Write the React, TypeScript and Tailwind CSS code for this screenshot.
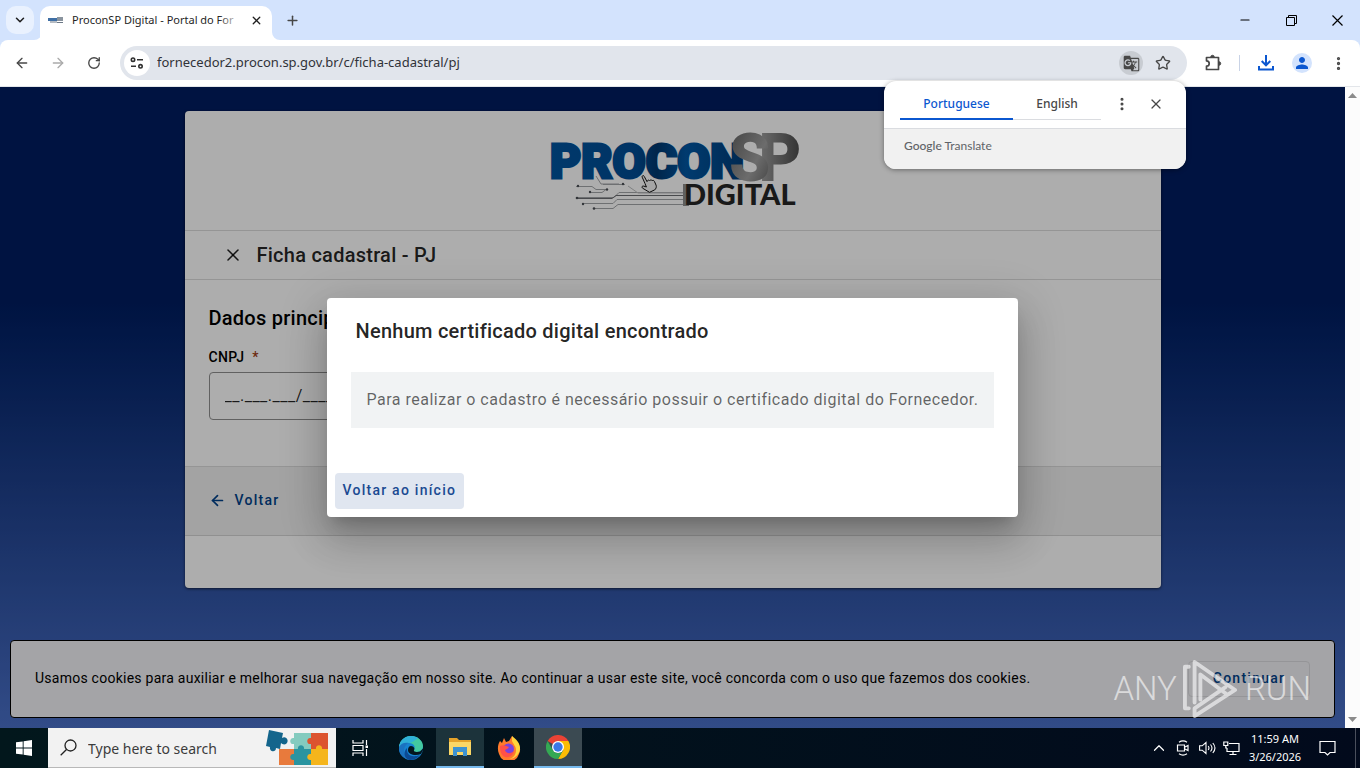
import type { ReactNode } from "react";
import { ArrowLeft, ArrowRight, ChevronDown, ChevronUp, Minus, MoreVertical, Plus, RotateCw, Star, X } from "lucide-react";
import { MdGTranslate, MdPerson } from "react-icons/md";

function IconButton({ label, className = "", children }: { label: string; className?: string; children: ReactNode }) {
  return (
    <button type="button" aria-label={label} className={`flex shrink-0 items-center justify-center ${className}`}>
      {children}
    </button>
  );
}

function TabStrip() {
  return (
    <header className="flex h-10 shrink-0 items-end bg-[#d3e3fd] pl-1.5 text-[#1f1f1f]">
      <IconButton label="Search tabs" className="mb-1.5 h-7 w-7 rounded-[10px] bg-[#e9f1fe]">
        <ChevronDown size={14} strokeWidth={2.6} />
      </IconButton>
      <div className="flex h-[34px] items-end">
        <svg width="8" height="8" viewBox="0 0 8 8" className="shrink-0">
          <path d="M8 0v8H0a8 8 0 0 0 8-8z" fill="#fff" />
        </svg>
        <div className="-ml-0.5 flex h-[34px] w-[232px] items-center rounded-t-[10px] bg-white pr-1.5 pb-1.5 pl-2">
          <svg width="16" height="16" viewBox="0 0 16 16" className="mr-2 shrink-0">
            <path d="M0 6h10v3H0z" fill="#3f6fa5" />
            <path d="M9 5h6v4H9z" fill="#8a949e" />
            <path d="M2 10h7M9 10.500h6" stroke="#6c7886" strokeWidth="1" />
          </svg>
          <span className="relative flex-1 overflow-hidden text-[11px] leading-5 whitespace-nowrap">
            ProconSP Digital - Portal do For
            <span className="absolute inset-y-0 right-0 w-6 bg-linear-to-r from-white/0 to-white" />
          </span>
          <IconButton label="Close tab" className="ml-1 h-5 w-5">
            <X size={13} strokeWidth={2.4} />
          </IconButton>
        </div>
        <svg width="8" height="8" viewBox="0 0 8 8" className="shrink-0">
          <path d="M0 0v8h8a8 8 0 0 1-8-8z" fill="#fff" />
        </svg>
      </div>
      <IconButton label="New tab" className="-ml-0.5 mb-1.5 h-7 w-7 text-[#474747]">
        <Plus size={15} strokeWidth={2.4} />
      </IconButton>
      <div className="ml-auto flex h-10 text-black">
        <IconButton label="Minimize" className="w-[46px]">
          <Minus size={14} strokeWidth={1.8} />
        </IconButton>
        <IconButton label="Restore" className="w-[46px]">
          <svg width="11" height="11" viewBox="0 0 11 11" fill="none" stroke="currentColor">
            <path d="M.5 2.500h8v8h-8zM2.500 2.500v-2h8v8h-2" />
          </svg>
        </IconButton>
        <IconButton label="Close" className="w-[46px]">
          <svg width="11" height="11" viewBox="0 0 11 11" stroke="currentColor" strokeWidth="1.2">
            <path d="M.5.5l10 10M10.500.5l-10 10" />
          </svg>
        </IconButton>
      </div>
    </header>
  );
}

function Toolbar() {
  return (
    <div className="flex h-[47px] shrink-0 items-center rounded-t-lg border-b border-[#e3e6ea] bg-white pr-2 pl-2 text-[#474747]">
      <IconButton label="Back" className="h-7 w-7">
        <ArrowLeft size={16} />
      </IconButton>
      <IconButton label="Forward" className="ml-2 h-7 w-7 text-[#aaaaaa]">
        <ArrowRight size={16} />
      </IconButton>
      <IconButton label="Reload" className="ml-2 h-7 w-7">
        <RotateCw size={14} strokeWidth={2.3} />
      </IconButton>
      <form className="ml-3 flex h-[34px] flex-1 items-center rounded-full bg-[#e1e5ec] pr-3 pl-1">
        <IconButton label="View site information" className="h-[26px] w-[26px] rounded-full bg-white">
          <svg width="14" height="12" viewBox="0 0 14 12" fill="none" stroke="#303030" strokeWidth="1.6">
            <circle cx="3" cy="2.700" r="1.700" />
            <path d="M7 2.700h6M1 9.300h5" />
            <circle cx="10.500" cy="9.300" r="1.700" />
          </svg>
        </IconButton>
        <input
          aria-label="Address and search bar"
          defaultValue="fornecedor2.procon.sp.gov.br/c/ficha-cadastral/pj"
          className="ml-[7px] h-6 w-0 flex-1 bg-transparent pb-0.5 text-[13px] text-[#303238] outline-none"
        />
        <IconButton label="Translate this page" className="h-6 w-6 rounded-full bg-[#c8ccd2]">
          <MdGTranslate size={17} />
        </IconButton>
        <IconButton label="Bookmark this tab" className="ml-2 h-6 w-6">
          <Star size={16} />
        </IconButton>
      </form>
      <IconButton label="Extensions" className="ml-3 h-7 w-7">
        <svg width="18" height="18" viewBox="0 0 18 18" fill="none" stroke="currentColor" strokeWidth="1.700" strokeLinejoin="round">
          <path d="M2.500 3.500h12v12h-12v-3.300a2.700 2.700 0 0 0 0-5.400z" />
          <path d="M6.800 3a1.700 1.700 0 0 1 3.400 0zM15 7.800a1.700 1.700 0 0 1 0 3.400z" fill="currentColor" strokeWidth="1" />
        </svg>
      </IconButton>
      <span className="mx-3 h-4 w-px bg-[#c9d3e6]" />
      <IconButton label="Downloads" className="h-7 w-7 text-[#0b57d0]">
        <svg width="18" height="18" viewBox="0 0 18 18" fill="none" stroke="currentColor" strokeWidth="2">
          <path d="M9 1v10M4.700 7L9 11.300 13.300 7M2 12v3.500h14V12" />
        </svg>
      </IconButton>
      <IconButton label="Profile" className="ml-3 h-5 w-5 rounded-full bg-[#d3e3fd] text-[#0b57d0]">
        <MdPerson size={18} />
      </IconButton>
      <IconButton label="Chrome menu" className="ml-3 h-7 w-7">
        <MoreVertical size={17} strokeWidth={2.6} />
      </IconButton>
    </div>
  );
}

function TranslateBubble() {
  return (
    <aside className="absolute top-[81px] right-[174px] z-20 w-[302px] overflow-hidden rounded-xl bg-white text-[#474747] shadow-[0_1px_5px_rgba(0,0,0,0.4)]">
      <div className="flex h-12 items-start border-b border-[#dadce0] pt-2 pl-4 text-xs font-medium">
        <button type="button" className="h-[31px] w-[113px] border-b-2 border-[#0b57d0] text-[#0b57d0]">
          Portuguese
        </button>
        <button type="button" className="h-[31px] w-[88px] border-b border-[#dadce0]">
          English
        </button>
        <IconButton label="Translate options" className="ml-2 h-[30px] w-[26px]">
          <MoreVertical size={16} strokeWidth={2.6} />
        </IconButton>
        <IconButton label="Close translate" className="ml-2 h-[30px] w-[26px]">
          <X size={16} strokeWidth={1.8} />
        </IconButton>
      </div>
      <p className="h-10 bg-[#f1f1f1] px-5 py-2 font-['Lato',sans-serif] text-xs leading-[18px] text-[#5f6368]">
        <span className="font-medium">Google</span> Translate
      </p>
    </aside>
  );
}

function ProconLogo() {
  return (
    <svg width="270" height="100" viewBox="538 116 270 100" role="img" aria-label="Procon SP Digital">
      <defs>
        <linearGradient id="blue" x1="0" y1="0" x2="1" y2="0">
          <stop offset="0" stopColor="#00549f" />
          <stop offset="0.450" stopColor="#004c94" />
          <stop offset="0.550" stopColor="#00386f" />
          <stop offset="0.700" stopColor="#0057a4" />
          <stop offset="1" stopColor="#003d78" />
        </linearGradient>
        <linearGradient id="steel" x1="0" y1="0" x2="1" y2="1">
          <stop offset="0" stopColor="#5d5d5d" />
          <stop offset="0.600" stopColor="#a0a0a0" />
          <stop offset="1" stopColor="#5a5a5a" />
        </linearGradient>
        <linearGradient id="steelDark" x1="0" y1="0" x2="1" y2="0">
          <stop offset="0" stopColor="#a2a2a2" />
          <stop offset="1" stopColor="#4a4a4a" />
        </linearGradient>
      </defs>
      <g fill="none" stroke="#a3a5a8" strokeWidth="1">
        <path d="M576 186.500h16l4 3h12M590 192.500h12l4-3M603 184.500h22M578 197.500h36l5-5h70M583 203.500h30l4-4h68M594 208.500h19l5-4h66M596 176l5 8h18" />
        <path d="M576 198.500h36l4-3h70" stroke="#6c6e72" />
        <path d="M628 186l10 7h48" stroke="#bcbec0" />
      </g>
      <g fill="#4b4f55">
        <circle cx="577" cy="198" r="1.300" />
        <circle cx="578" cy="186" r="1.200" />
        <circle cx="583" cy="204" r="1.200" />
        <circle cx="594" cy="208.500" r="1.300" />
        <circle cx="607" cy="189.500" r="1.200" />
        <circle cx="623" cy="184" r="1.200" />
        <circle cx="590" cy="192" r="1.200" />
      </g>
      <text x="550" y="178" fontFamily="Roboto, sans-serif" fontSize="48" fontWeight="900" fill="url(#blue)" stroke="url(#blue)" strokeWidth="3">
        PROCON
      </text>
      <text x="759" y="180" fontFamily="Roboto, sans-serif" fontSize="64" fontWeight="700" fill="url(#steelDark)" stroke="url(#steelDark)" strokeWidth="2">
        P
      </text>
      <text x="730" y="180" fontFamily="Roboto, sans-serif" fontSize="64" fontWeight="700" fill="url(#steel)" stroke="url(#steel)" strokeWidth="2">
        S
      </text>
      <path d="M683 184h6v22h-6z" fill="#8d8d8d" />
      <text x="684" y="205" fontFamily="Lato, sans-serif" fontSize="29" fontWeight="900" fill="#262626">
        DIGITAL
      </text>
    </svg>
  );
}

function HandCursor() {
  return (
    <svg width="18" height="20" viewBox="0 0 18 20" className="absolute top-[87px] left-[640px]">
      <path
        d="M5 9.500L2.200 3.200c-.6-1.500 1.300-2.300 2-.9L7 7.600l.6-1c.8-.8 1.600-.5 2 .2l.5-.6c.9-.6 1.700-.2 2 .5.900-.7 1.900-.3 2.300.7l1.700 3.800c.6 1.700-.1 3.600-1.400 4.700L9.500 18.300 2.600 14.200c-1.300-1.200-.3-2.600 1.200-2.100l2.600.9z"
        fill="#f5f5f5"
        stroke="#111"
      />
    </svg>
  );
}

function RegistrationCard() {
  return (
    <section className="mx-auto max-w-[976px] overflow-hidden rounded bg-white shadow-[0_1px_3px_rgba(0,0,0,0.6)]">
      <div className="flex h-[120px] items-start justify-center border-b border-[#dcdcdc] pt-[5px]">
        <ProconLogo />
      </div>
      <div className="flex h-[49px] items-center border-b border-[#dcdcdc] px-[38px] text-black/87">
        <IconButton label="Fechar" className="h-5 w-5">
          <X size={20} strokeWidth={1.8} />
        </IconButton>
        <h1 className="ml-[14px] text-xl font-medium tracking-[0.0125em]">Ficha cadastral - PJ</h1>
      </div>
      <form>
        <div className="h-[187px] border-b border-[#dcdcdc] px-6 pt-6">
          <h2 className="text-xl leading-7 font-medium tracking-[0.0125em]">Dados principais</h2>
          <label htmlFor="cnpj" className="mt-[15px] block text-sm leading-5 font-medium tracking-wide">
            CNPJ <span className="ml-1 text-[#a03c14]">*</span>
          </label>
          <input
            id="cnpj"
            defaultValue="__.___.___/____-__"
            className="mt-[5px] h-12 w-[300px] rounded border border-[#8f8f8f] bg-transparent px-[15px] pb-0.5 text-base tracking-[0.03125em] text-black/87"
          />
        </div>
        <div className="flex h-[69px] items-center border-b border-[#d4d4d4] bg-[#f1f1f1] px-6">
          <button type="button" className="flex items-center gap-[9px] pb-0.5 text-sm font-medium tracking-[0.0893em] text-[#00418a]">
            <ArrowLeft size={17} strokeWidth={2.4} />
            Voltar
          </button>
        </div>
      </form>
      <div className="h-[52px]" />
    </section>
  );
}

function CookieBar() {
  return (
    <div className="absolute right-2.5 bottom-2.5 left-2.5 flex h-[78px] items-center justify-between rounded border border-black bg-[#f2f2f6] px-6">
      <p className="pb-0.5 text-sm tracking-[0.0178em] text-black">
        Usamos cookies para auxiliar e melhorar sua navegação em nosso site. Ao continuar a usar este site, você concorda com o uso que
        fazemos dos cookies.
      </p>
      <button
        type="button"
        className="h-9 w-[122px] rounded border border-[#dcdce0] pb-0.5 text-sm font-medium tracking-[0.0893em] text-[#00418a]"
      >
        Continuar
      </button>
    </div>
  );
}

function CertificateDialog() {
  return (
    <div className="absolute inset-0 flex items-center justify-center bg-black/32">
      <div
        role="dialog"
        aria-labelledby="dialog-title"
        className="rounded bg-white shadow-[0_11px_15px_-7px_rgba(0,0,0,0.2),0_24px_38px_3px_rgba(0,0,0,0.14),0_9px_46px_8px_rgba(0,0,0,0.12)]"
      >
        <h2 id="dialog-title" className="px-[29px] pt-[19px] text-xl leading-7 font-medium tracking-[0.0125em] text-black/87">
          Nenhum certificado digital encontrado
        </h2>
        <p className="mx-6 mt-[27px] bg-[#f1f3f4] p-4 text-base leading-6 tracking-[0.03125em] text-black/60">
          Para realizar o cadastro é necessário possuir o certificado digital do Fornecedor.
        </p>
        <div className="px-2 pt-[45px] pb-2">
          <button type="button" className="h-9 rounded bg-[#e0e6f0] px-2 pb-0.5 text-sm font-medium tracking-[0.0893em] text-[#1b4a92]">
            Voltar ao início
          </button>
        </div>
      </div>
    </div>
  );
}

function Watermark() {
  return (
    <div className="pointer-events-none absolute right-[34px] bottom-2 flex items-center gap-1.5 text-[33px] font-light text-white/60">
      <span>ANY</span>
      <svg width="56" height="62" viewBox="0 0 58 62" fill="none" stroke="currentColor" strokeWidth="4" strokeLinejoin="round" strokeLinecap="round">
        <path d="M6 8H2v43h4M12 45V3l42 29-8 5L18 16v26M54 32L12 59v-8l32-22" />
      </svg>
      <span>RUN</span>
    </div>
  );
}

function Scrollbar() {
  return (
    <div className="flex w-[15px] shrink-0 flex-col items-center justify-between bg-[#fcfcfc] py-1.5">
      <svg width="9" height="5" viewBox="0 0 9 5" fill="#8b8b8b">
        <path d="M4.500 0L9 5H0z" />
      </svg>
      <svg width="9" height="5" viewBox="0 0 9 5" fill="#8b8b8b">
        <path d="M0 0h9L4.500 5z" />
      </svg>
    </div>
  );
}

function PuzzleArt() {
  return (
    <svg width="64" height="38" viewBox="0 0 64 38" className="shrink-0">
      <path d="M28 4h17v16H28v-5c-5 1-5-7 0-6z" fill="#84cbbf" />
      <path d="M45 4h17v16h-5c1 4-7 4-6 0h-6v-5c-5 1-5-7 0-6z" fill="#dc5430" />
      <path d="M13 20h15v16H13z" fill="#e87a3c" />
      <path d="M28 20h4c-1-5 7-5 6 0h7v16H28v-5c-5 1-5-7 0-6z" fill="#2a94a0" />
      <path d="M45 20h5c-1-5 7-5 6 0h6v16H45v-5c-5 1-5-7 0-6z" fill="#f5b51c" />
      <path d="M3 1l14 3-1 5c4-3 8 3 4 6-2 1-4 0-5-1l-1 6-4-1c0 5-7 4-6-1l-4-1z" fill="#14658c" />
    </svg>
  );
}

function EdgeIcon() {
  return (
    <svg width="24" height="24" viewBox="0 0 24 24">
      <circle cx="12" cy="12" r="12" fill="#1683d0" />
      <path d="M0 11C1 4 6 0 12 0c7 0 12 5 12 10 0 4-3 6-7 6-2 0-3-1-2-2 2-3 0-7-5-7-5 0-8 2-10 4z" fill="#43c8a0" />
      <path d="M0 11C1 4 6 0 12 0c3 0 5 1 7 2-3 2-6 5-9 5-5 0-8 2-10 4z" fill="#2fb0d8" />
      <path d="M0 11c2-4 6-5 10-4-3 1-5 4-5 8 0 4 3 8 8 9C5 24-1 18 0 11z" fill="#1b72c0" />
      <path d="M8 14c0 5 5 8 13 5-3 4-7 5-11 5-5-2-6-8-2-12z" fill="#0c4a94" />
      <path d="M12 10c3 0 4 3 3 4-1 2 3 2.500 6 1.500l3-3V14l-2 4c-5 2-13 1-13-4 0-2 1-4 3-4z" fill="#04161e" />
    </svg>
  );
}

function ExplorerIcon() {
  return (
    <svg width="22" height="20" viewBox="0 0 22 20">
      <path d="M0 1h8l2 2h12v15H0z" fill="#e5a32a" />
      <path d="M0 5h22v13H0z" fill="#fbd766" />
      <path d="M4 10h14v9h-4v-4H8v4H4z" fill="#3e93d0" />
    </svg>
  );
}

function FirefoxIcon() {
  return (
    <svg width="24" height="24" viewBox="0 0 24 24">
      <path d="M3 5l2 2 2-5 2 4 3-1 3-5 3 5 3 2c2 3 3 7 1 11a10.500 10.500 0 0 1-20 0C0 13 1 8 3 5z" fill="#ff7a2c" />
      <path d="M15 0c4 3 8 7 8 12 0 6-5 11-11 11 5-1 7-5 7-9s-3-6-4-9z" fill="#ffd43c" />
      <circle cx="11.500" cy="13" r="5.500" fill="#7a42dc" />
      <path d="M3 10c4-2 6 0 9 1-1 2-3 2-4 3 1 4 6 4 9 1-1 5-5 7-9 6-4-2-5-6-5-11z" fill="#ff5148" />
    </svg>
  );
}

function ChromeIcon() {
  return (
    <svg width="24" height="24" viewBox="0 0 24 24">
      <path d="M12 12L1.600 6A12 12 0 0 1 22.400 6z" fill="#ea4335" />
      <path d="M12 6h10.400A12 12 0 0 1 12 24l5.200-9z" fill="#fbbc05" />
      <path d="M1.600 6l5.200 9a6 6 0 0 0 10.400 0L12 24A12 12 0 0 1 1.600 6z" fill="#34a853" />
      <circle cx="12" cy="12" r="6" fill="#fff" />
      <circle cx="12" cy="12" r="4.700" fill="#3b78e7" />
    </svg>
  );
}

function Taskbar() {
  return (
    <footer className="flex h-10 shrink-0 items-stretch bg-linear-to-r from-[#02171c] to-[#020a1c] text-white">
      <IconButton label="Start" className="w-12">
        <svg width="16" height="16" viewBox="0 0 16 16" fill="currentColor">
          <path d="M0 2.300L6.700 1.400v6.200H0zM7.600 1.200L16 0v7.600H7.600zM0 8.400h6.700v6.200L0 13.700zM7.600 8.400H16V16l-8.400-1.200z" />
        </svg>
      </IconButton>
      <div className="flex w-72 shrink-0 items-center border-b border-[#b8b8b8] bg-[#f2f2f2] pr-1.5 pl-3 text-[#303030]">
        <svg width="17" height="17" viewBox="0 0 17 17" fill="none" stroke="#222" strokeWidth="1.300" className="shrink-0">
          <circle cx="10.500" cy="6.500" r="5.500" />
          <path d="M6.500 10.500L.7 16.300" />
        </svg>
        <input
          aria-label="Search"
          placeholder="Type here to search"
          className="ml-[11px] h-8 w-0 flex-1 bg-transparent pt-0.5 text-sm outline-none placeholder:text-[#3c3c3c]"
        />
        <PuzzleArt />
      </div>
      <IconButton label="Task view" className="w-12">
        <svg width="17" height="16" viewBox="0 0 17 16" fill="none" stroke="currentColor" strokeWidth="1.200">
          <path d="M1 0v3h10V0M1 16v-3h10v3M1 5.500h10v5H1zM14.500 0v5M14.500 9v7" />
          <path d="M13.500 5.500h2.500v2.500h-2.500z" fill="currentColor" stroke="none" />
        </svg>
      </IconButton>
      <IconButton label="Microsoft Edge" className="ml-px w-[51px]">
        <EdgeIcon />
      </IconButton>
      <IconButton label="File Explorer" className="w-12 border-b-2 border-[#76b9ed] bg-[#1c333b]">
        <ExplorerIcon />
      </IconButton>
      <IconButton label="Firefox" className="w-[50px]">
        <FirefoxIcon />
      </IconButton>
      <IconButton label="Google Chrome" className="w-12 border-b-2 border-[#76b9ed] bg-[#3b4a52]">
        <ChromeIcon />
      </IconButton>
      <div className="ml-auto flex items-center">
        <IconButton label="Show hidden icons" className="h-6 w-6">
          <ChevronUp size={18} strokeWidth={1.6} />
        </IconButton>
        <IconButton label="Meet now" className="h-6 w-6">
          <svg width="14" height="16" viewBox="0 0 14 16" fill="none" stroke="currentColor" strokeWidth="1.200">
            <path d="M1.500 5h7v6h-7zM9 7l3-1.500v5L9 9M3 2.200c2.500-1.600 5.500-1.600 8 0M3 13.800c2.500 1.600 5.500 1.600 8 0" />
          </svg>
        </IconButton>
        <IconButton label="Volume" className="h-6 w-6">
          <svg width="17" height="14" viewBox="0 0 17 14" fill="none" stroke="currentColor" strokeWidth="1.100">
            <path d="M.6 4.800h2.600L7 1.500v11L3.200 9.200H.6zM9.200 5c.9 1.200.9 2.800 0 4M11.500 3.500c1.700 2 1.700 5 0 7M13.800 2c2.600 3 2.600 7 0 10" />
          </svg>
        </IconButton>
        <IconButton label="Network" className="h-6 w-6">
          <svg width="17" height="15" viewBox="0 0 17 15" fill="none" stroke="currentColor" strokeWidth="1.200">
            <path d="M6 2.500h10v8H4V7M10 10.500v3M6.500 13.500h7M.8 1h4v3.500h-4zM2.800 4.500V7H4" />
          </svg>
        </IconButton>
        <div className="w-16 text-center text-[11px] leading-[18px]">
          <p>11:59 AM</p>
          <p>3/26/2026</p>
        </div>
        <IconButton label="Notifications" className="ml-0.5 h-10 w-9">
          <svg width="17" height="17" viewBox="0 0 17 17" fill="none" stroke="currentColor" strokeWidth="1.200">
            <path d="M1 1.500h15v11h-5L8.500 15 6 12.500H1z" />
          </svg>
        </IconButton>
        <span className="ml-2.5 h-10 w-px bg-[#4a4f5c]" />
        <span className="w-1" />
      </div>
    </footer>
  );
}

export default function App() {
  return (
    <div className="relative flex h-screen flex-col overflow-hidden bg-[#d3e3fd] font-['Noto_Sans',sans-serif]">
      <TabStrip />
      <Toolbar />
      <div className="flex min-h-0 flex-1">
        <main className="relative flex-1 overflow-hidden bg-linear-to-b from-[#001c60] from-33% to-[#4a70c8] px-6 pt-6 font-['Roboto',sans-serif]">
          <RegistrationCard />
          <HandCursor />
          <CookieBar />
          <CertificateDialog />
          <Watermark />
        </main>
        <Scrollbar />
      </div>
      <Taskbar />
      <TranslateBubble />
    </div>
  );
}
